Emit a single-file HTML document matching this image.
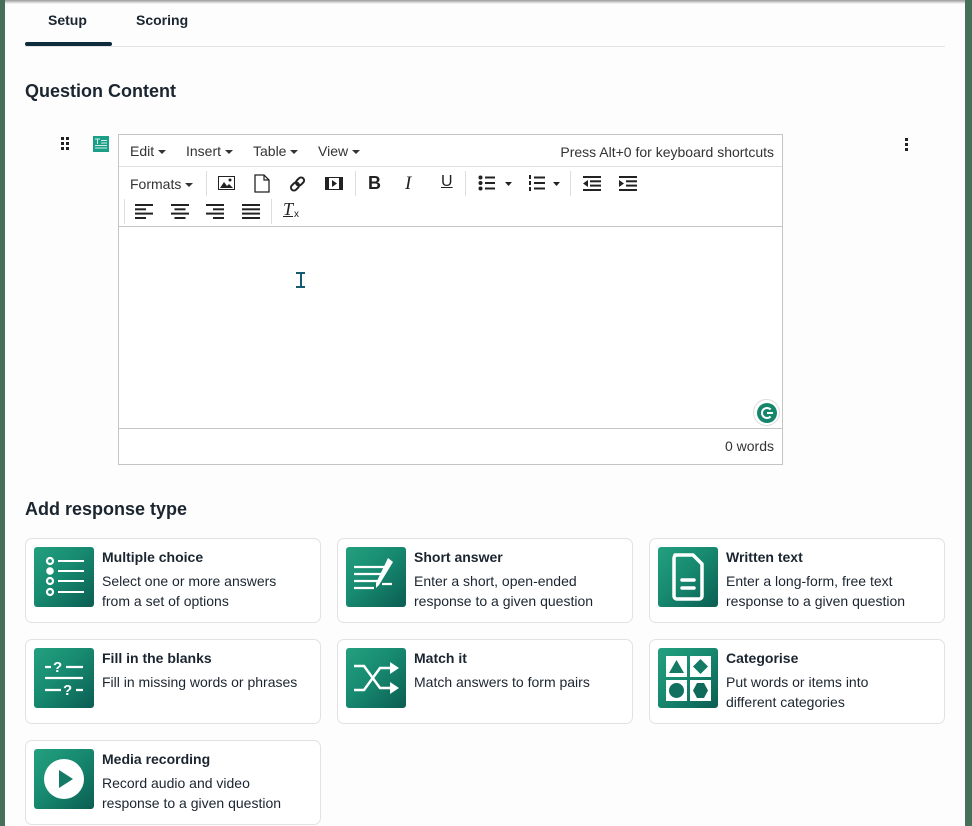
<!DOCTYPE html>
<html><head><meta charset="utf-8"><style>
*{box-sizing:border-box;margin:0;padding:0}
body{width:972px;height:826px;overflow:hidden;background:#fdfdfd;font-family:"Liberation Sans",sans-serif;color:#1b2530;position:relative}
.a{position:absolute}
.lstrip{left:0;top:0;width:5px;height:826px;background:#47705a}
.rstrip{right:0;top:0;width:7px;height:826px;background:#47705a}
.topsh{left:0;top:0;width:972px;height:4px;background:linear-gradient(#9a9a9a,#fdfdfd)}
.tab{font-size:14px;font-weight:bold;color:#1b2530}
.h{font-size:18px;font-weight:bold;color:#1b2530}
.ed{left:118px;top:134px;width:665px;height:331px;border:1px solid #c5c5c5;background:#fff}
.menu{font-size:14px;color:#333}
.caret{display:inline-block;width:0;height:0;border-left:4px solid transparent;border-right:4px solid transparent;border-top:4px solid #333;vertical-align:middle;margin-left:4px}
.sep{width:1px;background:#ddd}
.card{width:296px;height:85px;border:1px solid #e2e2e2;border-radius:7px;background:#fff}
.ic{position:absolute;left:8px;top:8px;width:60px;height:60px;border-radius:3px;background:linear-gradient(135deg,#23a07f 0%,#178a70 45%,#0b5d52 100%);overflow:hidden}
.ct{position:absolute;left:76px;top:10px;font-size:14px;font-weight:bold;color:#1b2530}
.cd{position:absolute;left:76px;top:32px;font-size:14px;line-height:20px;color:#1b2530;width:190px}
</style></head><body>
<div class="a topsh"></div>
<div class="a lstrip"></div>
<div class="a rstrip"></div>

<div class="a tab" style="left:48px;top:12px">Setup</div>
<div class="a tab" style="left:136px;top:12px">Scoring</div>
<div class="a" style="left:25px;top:46px;width:920px;height:1px;background:#e4e4e4"></div>
<div class="a" style="left:25px;top:42px;width:87px;height:4px;border-radius:2px;background:#0e2c3c"></div>

<div class="a h" style="left:25px;top:81px">Question Content</div>

<svg class="a" style="left:60px;top:136px" width="10" height="14"><g fill="#222"><rect x="1" y="1" width="3" height="3"/><rect x="6" y="1" width="3" height="3"/><rect x="1" y="6" width="3" height="3"/><rect x="6" y="6" width="3" height="3"/><rect x="1" y="11" width="3" height="3"/><rect x="6" y="11" width="3" height="3"/></g></svg>
<svg class="a" style="left:93px;top:136px" width="16" height="16"><rect width="16" height="16" fill="#1a9f86"/><g stroke="#cfeee6" stroke-width="1"><line x1="2" y1="3" x2="7" y2="3"/><line x1="4.5" y1="3" x2="4.5" y2="8"/><line x1="8" y1="4.5" x2="14" y2="4.5"/><line x1="8" y1="7" x2="14" y2="7"/><line x1="2" y1="9.5" x2="14" y2="9.5"/><line x1="2" y1="12" x2="14" y2="12"/></g></svg>
<svg class="a" style="left:904px;top:137px" width="5" height="14"><g fill="#222"><rect x="1" y="1" width="3" height="3"/><rect x="1" y="6" width="3" height="3"/><rect x="1" y="11" width="3" height="3"/></g></svg>

<div class="a ed">
  <div class="a menu" style="left:11px;top:8px">Edit<span class="caret"></span></div>
  <div class="a menu" style="left:67px;top:8px">Insert<span class="caret"></span></div>
  <div class="a menu" style="left:134px;top:8px">Table<span class="caret"></span></div>
  <div class="a menu" style="left:199px;top:8px">View<span class="caret"></span></div>
  <div class="a menu" style="right:8px;top:9px">Press Alt+0 for keyboard shortcuts</div>
  <div class="a" style="left:0;top:31px;width:663px;height:1px;background:#e0e0e0"></div>
  <div class="a menu" style="left:11px;top:41px">Formats<span class="caret"></span></div>
  <div class="a sep" style="left:87px;top:36px;height:25px"></div>
  <svg class="a" style="left:99px;top:41px" width="17" height="14"><rect x="0.5" y="0.5" width="16" height="13" fill="#fff" stroke="#222"/><path d="M2 12 L6 6 L9 10 L11 8 L15 12Z" fill="#222"/><circle cx="12" cy="4" r="1.5" fill="#222"/></svg>
  <svg class="a" style="left:135px;top:39px" width="16" height="19"><path d="M1 1 H10 L15 6 V18 H1Z" fill="#fff" stroke="#222" stroke-width="1.3"/><path d="M10 1 V6 H15" fill="none" stroke="#222" stroke-width="1.2"/></svg>
  <svg class="a" style="left:170px;top:40px" width="18" height="18"><g fill="none" stroke="#222" stroke-width="2"><rect x="8" y="2" width="6" height="9" rx="3" transform="rotate(45 11 6.5)"/><rect x="3" y="7" width="6" height="9" rx="3" transform="rotate(45 6 11.5)"/></g></svg>
  <svg class="a" style="left:206px;top:42px" width="18" height="13"><rect x="0.5" y="0.5" width="17" height="12" fill="#fff" stroke="#222"/><rect x="1" y="1" width="3" height="11" fill="#222"/><rect x="14" y="1" width="3" height="11" fill="#222"/><path d="M7 3 L12 6.5 L7 10Z" fill="#222"/></svg>
  <div class="a sep" style="left:236px;top:36px;height:25px"></div>
  <div class="a" style="left:249px;top:38px;font-weight:bold;font-size:18px;color:#222">B</div>
  <div class="a" style="left:286px;top:38px;font-style:italic;font-family:'Liberation Serif',serif;font-size:19px;color:#222">I</div>
  <div class="a" style="left:322px;top:38px;text-decoration:underline;font-size:16px;color:#222">U</div>
  <div class="a sep" style="left:346px;top:36px;height:25px"></div>
  <svg class="a" style="left:359px;top:40px" width="40" height="16"><g fill="#222"><circle cx="2.5" cy="2.5" r="2"/><circle cx="2.5" cy="8" r="2"/><circle cx="2.5" cy="13.5" r="2"/><rect x="7" y="1.5" width="10" height="2"/><rect x="7" y="7" width="10" height="2"/><rect x="7" y="12.5" width="10" height="2"/><path d="M27 7 h7 l-3.5 4z"/></g></svg>
  <svg class="a" style="left:409px;top:40px" width="40" height="16"><g fill="#222"><rect x="1" y="0" width="2" height="4"/><rect x="1" y="6" width="2" height="4"/><rect x="1" y="12" width="2" height="4"/><rect x="6" y="1.5" width="11" height="2"/><rect x="6" y="7" width="11" height="2"/><rect x="6" y="12.5" width="11" height="2"/><path d="M25 7 h7 l-3.5 4z"/></g></svg>
  <div class="a sep" style="left:451px;top:36px;height:25px"></div>
  <svg class="a" style="left:464px;top:41px" width="18" height="15"><g fill="#222"><rect x="0" y="0" width="18" height="2"/><rect x="7" y="4.3" width="11" height="2"/><rect x="7" y="8.6" width="11" height="2"/><rect x="0" y="13" width="18" height="2"/><path d="M5 4 L0 7.5 L5 11z"/></g></svg>
  <svg class="a" style="left:500px;top:41px" width="18" height="15"><g fill="#222"><rect x="0" y="0" width="18" height="2"/><rect x="7" y="4.3" width="11" height="2"/><rect x="7" y="8.6" width="11" height="2"/><rect x="0" y="13" width="18" height="2"/><path d="M0 4 L5 7.5 L0 11z"/></g></svg>
  <div class="a sep" style="left:5px;top:64px;height:25px"></div>
  <svg class="a" style="left:16px;top:69px" width="18" height="15"><g fill="#222"><rect y="0" width="18" height="2"/><rect y="4.3" width="11" height="2"/><rect y="8.6" width="18" height="2"/><rect y="13" width="11" height="2"/></g></svg>
  <svg class="a" style="left:52px;top:69px" width="18" height="15"><g fill="#222"><rect y="0" width="18" height="2"/><rect x="3.5" y="4.3" width="11" height="2"/><rect y="8.6" width="18" height="2"/><rect x="3.5" y="13" width="11" height="2"/></g></svg>
  <svg class="a" style="left:87px;top:69px" width="18" height="15"><g fill="#222"><rect y="0" width="18" height="2"/><rect x="7" y="4.3" width="11" height="2"/><rect y="8.6" width="18" height="2"/><rect x="7" y="13" width="11" height="2"/></g></svg>
  <svg class="a" style="left:123px;top:69px" width="18" height="15"><g fill="#222"><rect y="0" width="18" height="2"/><rect y="4.3" width="18" height="2"/><rect y="8.6" width="18" height="2"/><rect y="13" width="18" height="2"/></g></svg>
  <div class="a sep" style="left:152px;top:64px;height:25px"></div>
  <div class="a" style="left:164px;top:64px;font-style:italic;font-size:18px;color:#222;font-family:'Liberation Serif',serif;text-decoration:underline">T</div>
  <div class="a" style="left:175px;top:74px;font-size:10px;color:#222">x</div>
  <div class="a" style="left:0;top:91px;width:663px;height:1px;background:#c5c5c5"></div>
  <div class="a" style="left:177px;top:137px;width:9px;height:16px;border-top:2px solid #145a70;border-bottom:2px solid #145a70"><div style="margin:0 auto;width:2px;height:12px;background:#145a70"></div></div>
  <div class="a" style="left:634px;top:264px;width:27px;height:27px;border-radius:50%;background:#fff;border:1px solid #ddd"></div>
  <div class="a" style="left:638px;top:268px;width:20px;height:20px;border-radius:50%;background:#15866b"></div>
  <div class="a" style="left:642px;top:272px;width:12px;height:12px;border-radius:50%;border:2px solid #fff;border-right-color:transparent"></div>
  <div class="a" style="left:648px;top:277px;width:6px;height:2px;background:#fff"></div>
  <div class="a" style="left:0;top:293px;width:663px;height:1px;background:#c5c5c5"></div>
  <div class="a menu" style="right:8px;top:303px">0 words</div>
</div>

<div class="a h" style="left:25px;top:499px">Add response type</div>

<div class="a card" style="left:25px;top:538px">
 <div class="ic"><svg width="60" height="60"><g fill="none" stroke="#fff" stroke-width="2.2"><circle cx="16" cy="14" r="3"/><circle cx="16" cy="34" r="3"/><circle cx="16" cy="45" r="3"/></g><circle cx="16" cy="24" r="3.8" fill="#fff"/><g stroke="#fff" stroke-width="2"><line x1="24" y1="14" x2="50" y2="14"/><line x1="24" y1="24" x2="50" y2="24"/><line x1="24" y1="34" x2="50" y2="34"/><line x1="24" y1="45" x2="50" y2="45"/></g></svg></div>
 <div class="ct">Multiple choice</div><div class="cd">Select one or more answers from a set of options</div></div>
<div class="a card" style="left:337px;top:538px">
 <div class="ic"><svg width="60" height="60"><g stroke="#fff" stroke-width="2.2"><line x1="8" y1="20" x2="40" y2="20"/><line x1="8" y1="27" x2="36" y2="27"/><line x1="8" y1="34" x2="32" y2="34"/><line x1="8" y1="41" x2="28" y2="41"/><line x1="36" y1="37" x2="46" y2="37"/></g><path d="M42 11 L47 15 L33 38 L30 41 L30 36Z" fill="#fff"/></svg></div>
 <div class="ct">Short answer</div><div class="cd">Enter a short, open-ended response to a given question</div></div>
<div class="a card" style="left:649px;top:538px">
 <div class="ic"><svg width="60" height="60"><path d="M17 8 H35 L44 17 V49 a3 3 0 0 1 -3 3 H19 a3 3 0 0 1 -3 -3 V11 a3 3 0 0 1 3 -3Z" fill="none" stroke="#fff" stroke-width="3.5" stroke-linejoin="round"/><g stroke="#fff" stroke-width="3.5" stroke-linecap="round"><line x1="24" y1="33" x2="36" y2="33"/><line x1="24" y1="41" x2="36" y2="41"/></g></svg></div>
 <div class="ct">Written text</div><div class="cd">Enter a long-form, free text response to a given question</div></div>

<div class="a card" style="left:25px;top:639px">
 <div class="ic"><svg width="60" height="60"><g stroke="#fff" stroke-width="2.2"><line x1="11" y1="19" x2="17" y2="19"/><line x1="32" y1="19" x2="49" y2="19"/><line x1="11" y1="30" x2="49" y2="30"/><line x1="11" y1="42" x2="27" y2="42"/><line x1="42" y1="42" x2="49" y2="42"/></g><text x="19" y="24" fill="#fff" font-size="15" font-weight="bold" font-family="Liberation Sans">?</text><text x="29" y="47" fill="#fff" font-size="15" font-weight="bold" font-family="Liberation Sans">?</text></svg></div>
 <div class="ct">Fill in the blanks</div><div class="cd" style="width:220px">Fill in missing words or phrases</div></div>
<div class="a card" style="left:337px;top:639px">
 <div class="ic"><svg width="60" height="60"><g fill="none" stroke="#fff" stroke-width="2.5"><path d="M8 18 H18 L34 40 H46"/><path d="M8 42 H18 L34 20 H46"/></g><path d="M44 14 L53 20 L44 26Z M44 34 L53 40 L44 46Z" fill="#fff"/></svg></div>
 <div class="ct">Match it</div><div class="cd" style="width:220px">Match answers to form pairs</div></div>
<div class="a card" style="left:649px;top:639px">
 <div class="ic"><svg width="60" height="60"><rect x="8" y="8" width="21" height="21" fill="#fff"/><rect x="32" y="8" width="21" height="21" fill="#fff"/><rect x="8" y="32" width="21" height="21" fill="#fff"/><rect x="32" y="32" width="21" height="21" fill="#fff"/><path d="M18.5 12 L26 25 H11Z" fill="#137a65"/><path d="M42.5 11 L50 18.5 L42.5 26 L35 18.5Z" fill="#137a65"/><circle cx="18.5" cy="42.5" r="7.5" fill="#117060"/><path d="M39 35 H46 L50 42.5 L46 50 H39 L35 42.5Z" fill="#0f6a5c"/></svg></div>
 <div class="ct">Categorise</div><div class="cd">Put words or items into different categories</div></div>

<div class="a card" style="left:25px;top:740px">
 <div class="ic"><svg width="60" height="60"><circle cx="30" cy="30" r="20" fill="#fff"/><path d="M25 21 L39 30 L25 39Z" fill="#137a65"/></svg></div>
 <div class="ct">Media recording</div><div class="cd">Record audio and video response to a given question</div></div>
</body></html>
